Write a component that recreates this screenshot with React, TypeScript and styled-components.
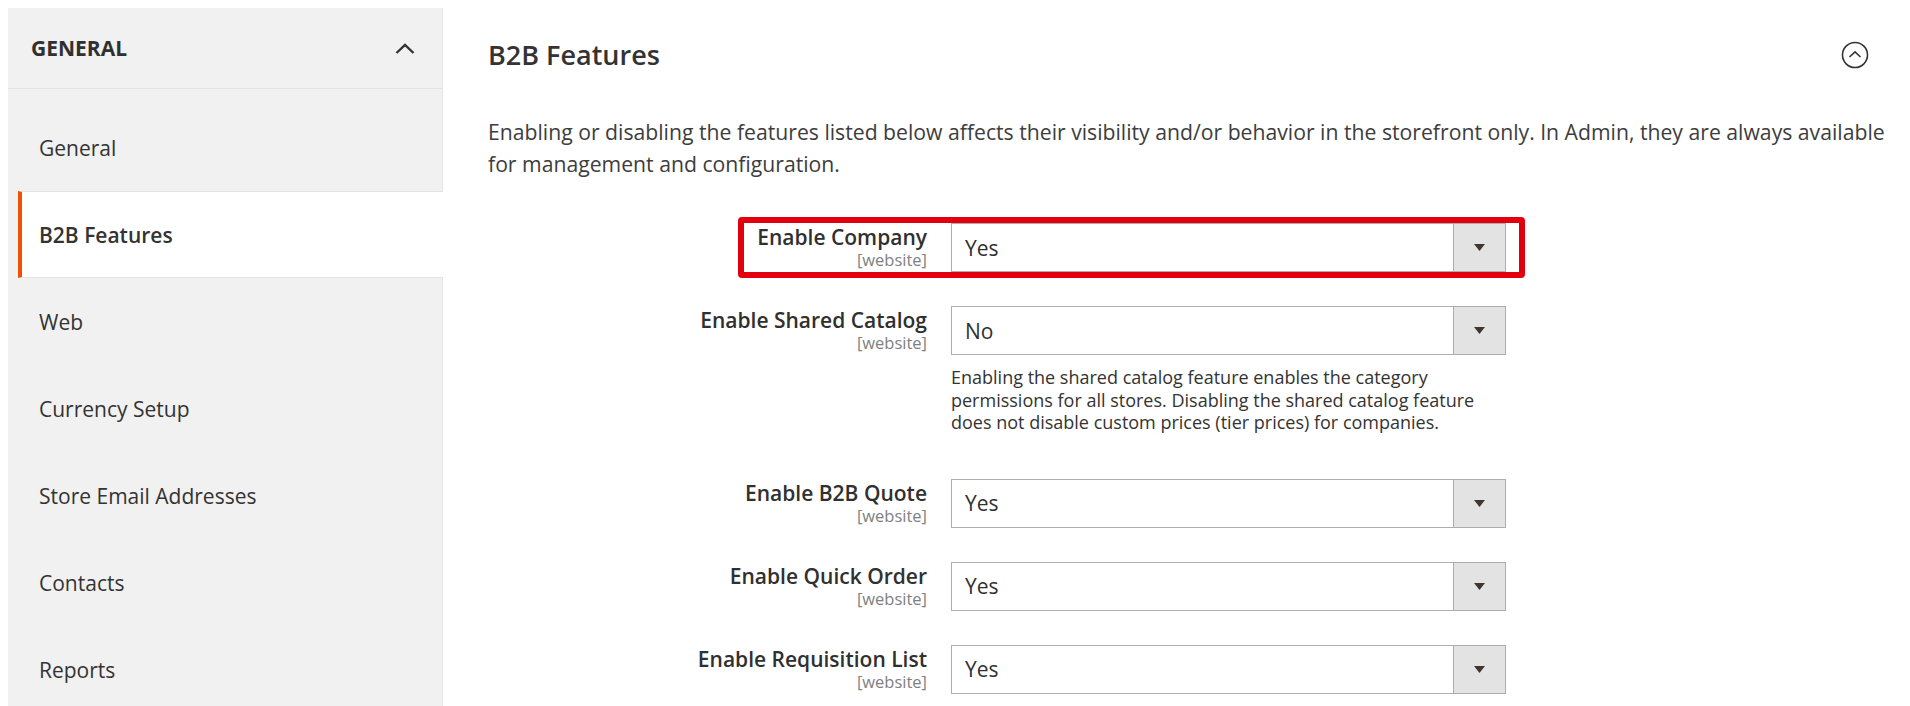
import React from "react";
import styled, { createGlobalStyle } from "styled-components";

const GlobalStyle = createGlobalStyle`
  html, body {
    margin: 0;
    padding: 0;
    background: #fff;
    overflow: hidden;
  }
  body {
    font-family: "Open Sans", "Liberation Sans", sans-serif;
    color: #303030;
  }
`;

const Page = styled.div`
  display: flex;
  align-items: flex-start;
  height: 706px;
  overflow: hidden;
`;

const Sidebar = styled.nav`
  box-sizing: border-box;
  flex: 0 0 435px;
  margin: 8px 0 0 8px;
  min-height: 720px;
  background: #f1f1f1;
  border-right: 1px solid #e3e3e3;
`;

const NavHeader = styled.div`
  box-sizing: border-box;
  display: flex;
  align-items: center;
  justify-content: space-between;
  height: 81px;
  padding: 0 27px 0 23px;
  border-bottom: 1px solid #e3e3e3;
  font-size: 21px;
  font-weight: 700;
  text-transform: uppercase;
  color: #303030;
`;

const NavList = styled.ul`
  list-style: none;
  margin: 0;
  padding: 15px 0 0;
`;

const NavItem = styled.li<{ $active?: boolean }>`
  box-sizing: border-box;
  display: flex;
  align-items: center;
  height: 87px;
  margin-left: 10px;
  margin-right: ${({ $active }) => ($active ? "-1px" : "0")};
  padding-left: 17px;
  border-left: 4px solid ${({ $active }) => ($active ? "#eb5202" : "transparent")};
  border-top: 1px solid ${({ $active }) => ($active ? "#e3e3e3" : "transparent")};
  border-bottom: 1px solid ${({ $active }) => ($active ? "#e3e3e3" : "transparent")};
  background: ${({ $active }) => ($active ? "#fff" : "transparent")};
  font-size: 21px;
  font-weight: ${({ $active }) => ($active ? 600 : 400)};
  color: #333;
`;

const Main = styled.main`
  flex: 1;
  padding: 39px 16px 0 45px;
`;

const TitleRow = styled.div`
  display: flex;
  align-items: center;
  justify-content: space-between;
  height: 32px;
  margin-right: 25px;
`;

const Title = styled.h2`
  margin: 0;
  font-size: 27px;
  line-height: 32px;
  font-weight: 600;
  color: #333;
`;

const Description = styled.p`
  margin: 45px 0 0;
  font-size: 21.2px;
  line-height: 32px;
  color: #3d3d3d;
`;

const Fieldset = styled.div`
  margin-top: 43px;
`;

const FieldRow = styled.div`
  position: relative;
  display: grid;
  grid-template-columns: 439px 555px;
  column-gap: 24px;
  margin-bottom: 34px;
`;

const Label = styled.div`
  text-align: right;
  padding-top: 2px;
`;

const LabelText = styled.span`
  display: block;
  font-size: 21px;
  line-height: 25px;
  font-weight: 600;
  color: #303030;
`;

const Scope = styled.span`
  display: block;
  font-size: 16.5px;
  line-height: 20px;
  color: #808080;
`;

const Select = styled.div`
  box-sizing: border-box;
  display: flex;
  height: 49px;
  border: 1px solid #adadad;
  background: #fff;
`;

const SelectValue = styled.div`
  flex: 1;
  display: flex;
  align-items: center;
  padding-left: 13px;
  font-size: 21px;
  color: #303030;
`;

const SelectButton = styled.div`
  flex: 0 0 51px;
  display: flex;
  align-items: center;
  justify-content: center;
  border-left: 1px solid #adadad;
  background: #e3e3e3;
`;

const Note = styled.div`
  margin: 11px 0;
  font-size: 18px;
  line-height: 22.5px;
  color: #333;
`;

const Highlight = styled.div`
  position: absolute;
  box-sizing: border-box;
  left: 250px;
  top: -6px;
  width: 787px;
  height: 61px;
  border: 6px solid #e2000f;
  border-radius: 4px;
  pointer-events: none;
`;

const Chevron = () => (
  <svg width="20" height="11" viewBox="0 0 20 11" fill="none">
    <path d="M1.5 10 L10 2 L18.5 10" stroke="#333" strokeWidth="2.4" />
  </svg>
);

const CollapseIcon = () => (
  <svg width="28" height="28" viewBox="0 0 28 28" fill="none">
    <circle cx="14" cy="14" r="12.5" stroke="#333" strokeWidth="1.6" />
    <path d="M8.5 16 L14 10.8 L19.5 16" stroke="#333" strokeWidth="1.6" />
  </svg>
);

const Arrow = () => (
  <svg width="11" height="7" viewBox="0 0 11 7">
    <path d="M0 0 H11 L5.5 7 Z" fill="#41362f" />
  </svg>
);

interface Field {
  label: string;
  value: string;
  note?: string;
  highlight?: boolean;
}

const fields: Field[] = [
  { label: "Enable Company", value: "Yes", highlight: true },
  {
    label: "Enable Shared Catalog",
    value: "No",
    note:
      "Enabling the shared catalog feature enables the category permissions for all stores. Disabling the shared catalog feature does not disable custom prices (tier prices) for companies.",
  },
  { label: "Enable B2B Quote", value: "Yes" },
  { label: "Enable Quick Order", value: "Yes" },
  { label: "Enable Requisition List", value: "Yes" },
];

const navItems = [
  "General",
  "B2B Features",
  "Web",
  "Currency Setup",
  "Store Email Addresses",
  "Contacts",
  "Reports",
];

const App: React.FC = () => (
  <>
    <GlobalStyle />
    <Page>
      <Sidebar>
        <NavHeader>
          General
          <Chevron />
        </NavHeader>
        <NavList>
          {navItems.map((item) => (
            <NavItem key={item} $active={item === "B2B Features"}>
              {item}
            </NavItem>
          ))}
        </NavList>
      </Sidebar>
      <Main>
        <TitleRow>
          <Title>B2B Features</Title>
          <CollapseIcon />
        </TitleRow>
        <Description>
          Enabling or disabling the features listed below affects their
          visibility and/or behavior in the storefront only. In Admin, they are
          always available for management and configuration.
        </Description>
        <Fieldset>
          {fields.map((field) => (
            <FieldRow key={field.label}>
              <Label>
                <LabelText>{field.label}</LabelText>
                <Scope>[website]</Scope>
              </Label>
              <div>
                <Select>
                  <SelectValue>{field.value}</SelectValue>
                  <SelectButton>
                    <Arrow />
                  </SelectButton>
                </Select>
                {field.note && <Note>{field.note}</Note>}
              </div>
              {field.highlight && <Highlight />}
            </FieldRow>
          ))}
        </Fieldset>
      </Main>
    </Page>
  </>
);

export default App;
